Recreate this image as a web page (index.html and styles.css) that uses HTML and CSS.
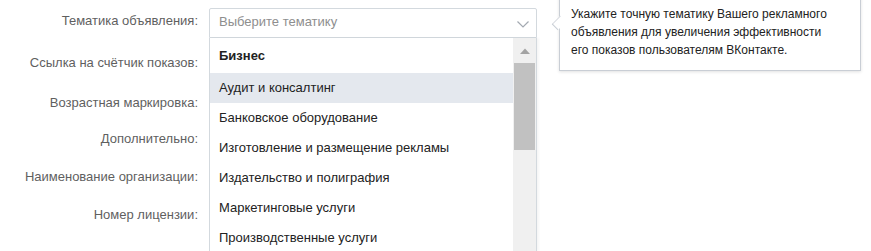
FILE: index.html
```html
<!DOCTYPE html>
<html lang="ru">
<head>
<meta charset="utf-8">
<link rel="stylesheet" href="styles.css">
</head>
<body>
<div class="form">
  <div class="labels">
    <div class="label l1">Тематика объявления:</div>
    <div class="label l2">Ссылка на счётчик показов:</div>
    <div class="label l3">Возрастная маркировка:</div>
    <div class="label l4">Дополнительно:</div>
    <div class="label l5">Наименование организации:</div>
    <div class="label l6">Номер лицензии:</div>
  </div>
  <div class="field">
    <div class="select">
      <span class="placeholder">Выберите тематику</span>
      <svg class="chevron" width="12" height="7" viewBox="0 0 12 7"><path d="M0.5 0.5 L6 6 L11.5 0.5" fill="none" stroke="#a3a9b1" stroke-width="1.2"/></svg>
    </div>
    <div class="dropdown">
      <div class="items">
        <div class="item group">Бизнес</div>
        <div class="item active">Аудит и консалтинг</div>
        <div class="item">Банковское оборудование</div>
        <div class="item">Изготовление и размещение рекламы</div>
        <div class="item">Издательство и полиграфия</div>
        <div class="item">Маркетинговые услуги</div>
        <div class="item">Производственные услуги</div>
      </div>
      <div class="scrollbar">
        <div class="scroll-up"><svg width="10" height="6" viewBox="0 0 10 6"><path d="M0 6 L5 0.5 L10 6 Z" fill="#a3a3a3"/></svg></div>
        <div class="thumb"></div>
      </div>
    </div>
    <div class="tooltip">
      <div class="tip-arrow"></div>
      Укажите точную тематику Вашего рекламного<br>объявления для увеличения эффективности<br>его показов пользователям ВКонтакте.
    </div>
  </div>
</div>
</body>
</html>
```

FILE: styles.css
```css
html, body {
  margin: 0;
  padding: 0;
  background: #fff;
  height: 251px;
  overflow: hidden;
}
body {
  font-family: "Liberation Sans", Arial, sans-serif;
  font-size: 13px;
  color: #222;
}
.form {
  display: flex;
  align-items: flex-start;
  gap: 11px;
  padding-left: 8px;
  height: 251px;
  overflow: hidden;
}
.labels {
  width: 190px;
  display: flex;
  flex-direction: column;
  text-align: right;
}
.label {
  line-height: 16px;
  color: #5f5f5f;
}
.l1 { margin-top: 13px; }
.l2 { margin-top: 26px; }
.l3 { margin-top: 24px; }
.l4 { margin-top: 20px; }
.l5 { margin-top: 22px; }
.l6 { margin-top: 22px; }

.field {
  position: relative;
  width: 328px;
  margin-top: 8px;
  height: 243px;
}
.select {
  height: 28px;
  border: 1px solid #d3d9de;
  border-radius: 2px 2px 0 0;
  display: flex;
  align-items: center;
  justify-content: space-between;
  padding: 0 7px 0 9px;
}
.placeholder {
  color: #8e8e8e;
  line-height: 16px;
  margin-top: -3px;
}
.chevron {
  margin-top: 2px;
}
.dropdown {
  position: absolute;
  left: 0;
  right: 0;
  top: 30px;
  bottom: 0;
  overflow: hidden;
  border-left: 1px solid #d3d9de;
  border-right: 1px solid #d3d9de;
  background: #fff;
  display: flex;
  box-shadow: 2px 0 2px rgba(0,0,0,0.04);
}
.items {
  flex: 1;
  display: flex;
  flex-direction: column;
}
.item {
  flex: none;
  height: 30px;
  line-height: 30px;
  padding-left: 9px;
  color: #222;
  white-space: nowrap;
}
.item.group {
  height: 35px;
  line-height: 35px;
  font-weight: bold;
}
.item.active {
  background: #e4e8ee;
}
.scrollbar {
  width: 23px;
  background: #f0f0f0;
  display: flex;
  flex-direction: column;
  align-items: center;
}
.scroll-up {
  height: 25px;
  display: flex;
  align-items: center;
  justify-content: center;
}
.thumb {
  width: 21px;
  height: 87px;
  background: #c1c1c1;
}
.tooltip {
  position: absolute;
  left: 350px;
  top: -11px;
  width: 277px;
  padding: 7px 12px 11px 11px;
  border: 1px solid #c9ced5;
  background: #fff;
  font-size: 12px;
  line-height: 18px;
  color: #222;
  box-shadow: 0 1px 3px rgba(0,0,0,0.12);
  white-space: nowrap;
}
.tip-arrow {
  position: absolute;
  left: -7px;
  top: 19px;
  width: 11px;
  height: 11px;
  background: #fff;
  border-left: 1px solid #c9ced5;
  border-bottom: 1px solid #c9ced5;
  transform: rotate(45deg) scaleX(0.7);
}
```
